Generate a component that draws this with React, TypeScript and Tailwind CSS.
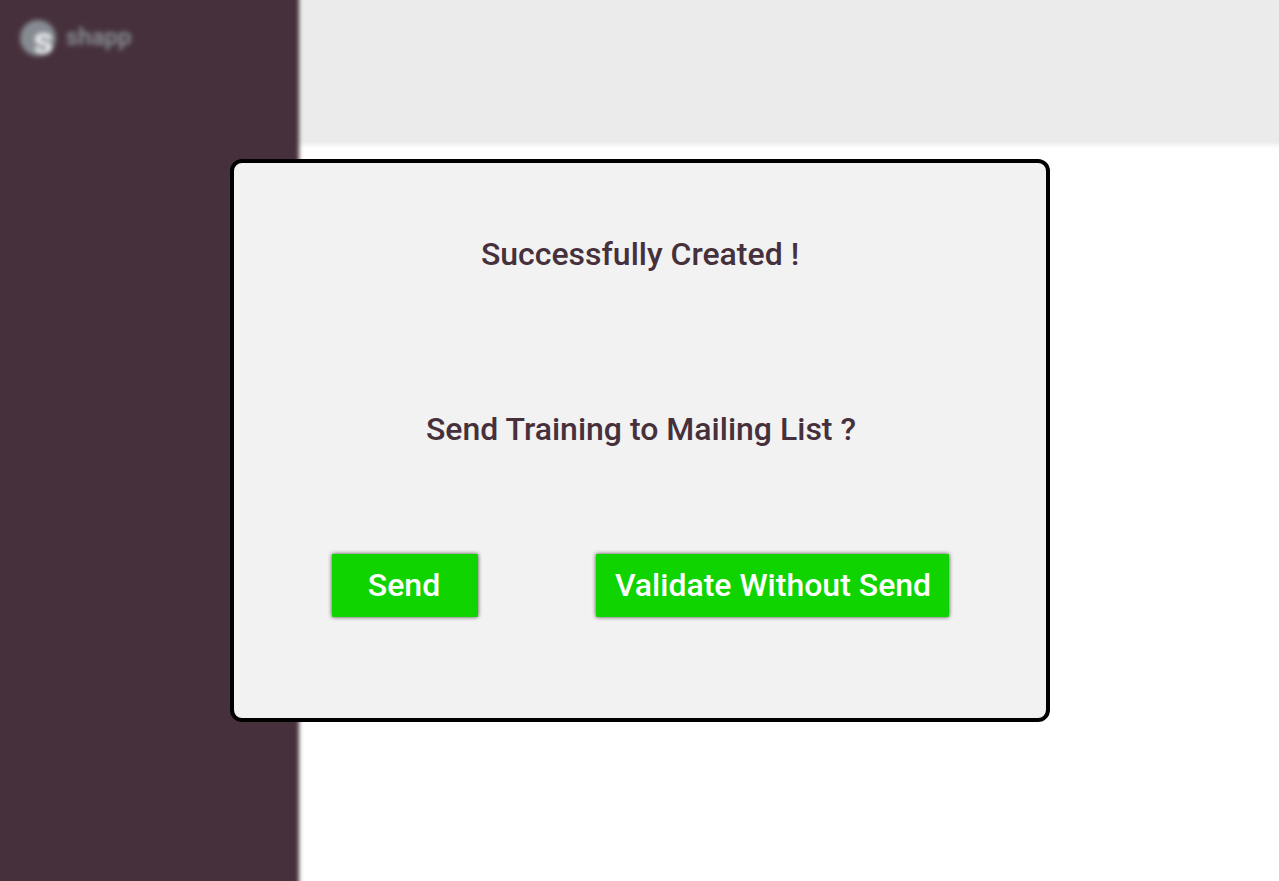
function Logo() {
  return (
    <div className="flex items-center gap-2.5 blur-[0.8px]">
      <svg className="h-9 w-9 overflow-visible" viewBox="0 0 36 36">
        <circle cx="18" cy="18" r="18" fill="#868b92" />
        <text
          x="23.5"
          y="34"
          textAnchor="middle"
          className="fill-[#f2f2f4] font-[Roboto,sans-serif] text-[39px] font-bold"
        >
          s
        </text>
      </svg>
      <span className="pb-0.5 font-[Roboto,sans-serif] text-[24px] leading-[34px] font-bold text-[#868b92]">
        shapp
      </span>
    </div>
  );
}

function Backdrop() {
  return (
    <div className="col-start-1 row-start-1 -m-5 flex blur-[2px]">
      <aside className="w-[319px] bg-[#46303c] pt-10 pl-10">
        <Logo />
      </aside>
      <main className="flex-1 bg-white">
        <header className="h-[165px] bg-[#ebebeb]" />
      </main>
    </div>
  );
}

function ActionButton({ label, className }: { label: string; className: string }) {
  return (
    <button
      className={`h-[63px] rounded-[1px] bg-[#10d400] pb-0.5 text-[32px] font-medium text-white shadow-[0_0_4px_rgba(0,0,0,0.7)] ${className}`}
    >
      {label}
    </button>
  );
}

export default function App() {
  return (
    <div className="grid h-screen w-screen grid-cols-1 grid-rows-1 overflow-hidden bg-white font-[Roboto,sans-serif]">
      <Backdrop />
      <section
        role="dialog"
        className="z-10 col-start-1 row-start-1 mt-[159px] ml-[230px] flex h-[563px] w-[820px] flex-col rounded-xl border-4 border-black bg-[#f2f2f2] text-[32px] leading-[38px] font-medium text-[#46303c]"
      >
        <h1 className="mt-[72px] text-center">Successfully Created !</h1>
        <p className="mt-[137px] pl-0.5 text-center">Send Training to Mailing List ?</p>
        <div className="mt-[106px] ml-[98px] flex gap-[118px]">
          <ActionButton label="Send" className="w-[146px] pr-0.5" />
          <ActionButton label="Validate Without Send" className="w-[353px] pl-px" />
        </div>
      </section>
    </div>
  );
}
